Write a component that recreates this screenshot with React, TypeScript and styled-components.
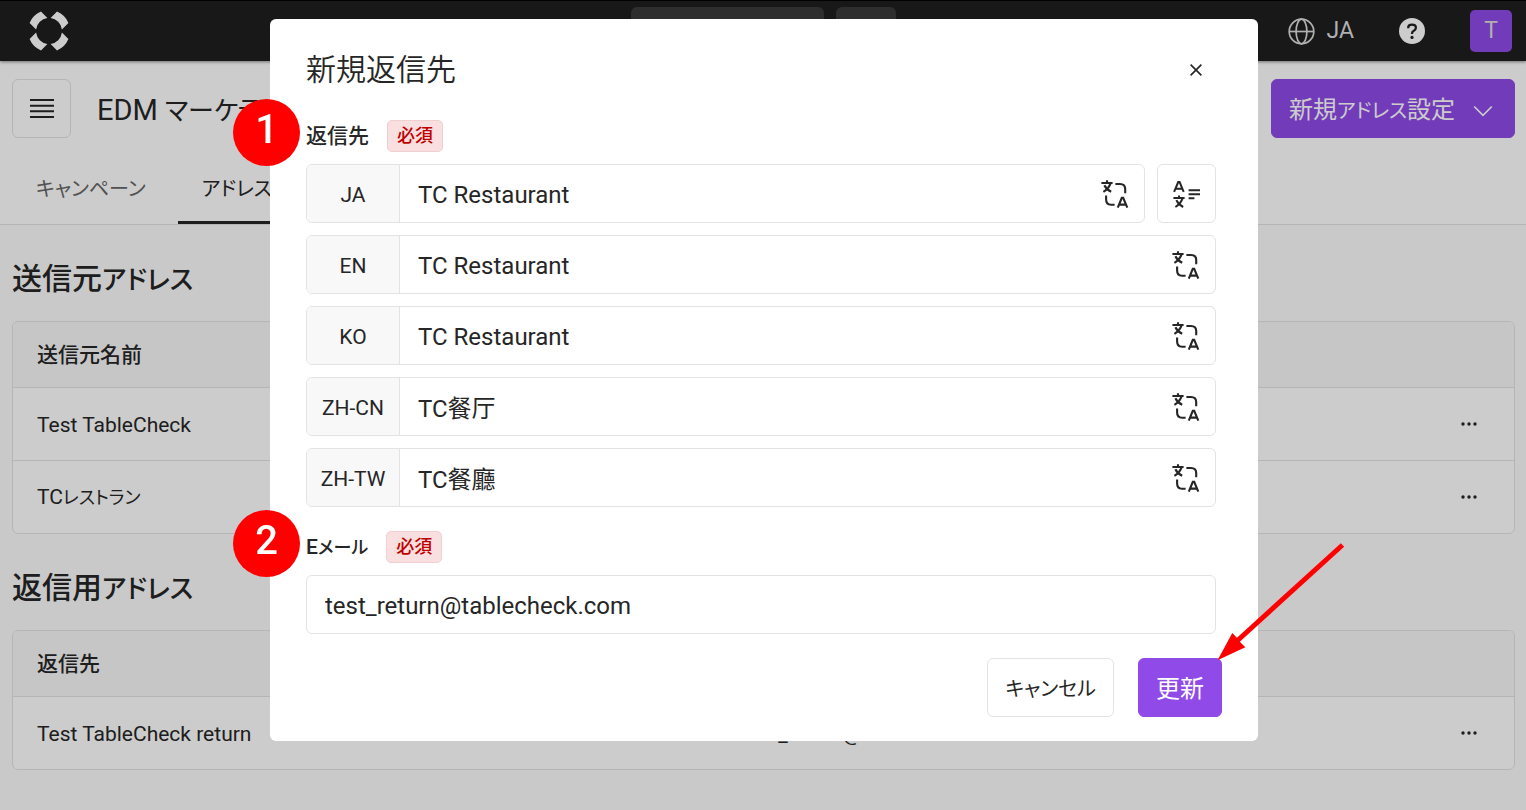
import React from "react";
import styled, { createGlobalStyle, css } from "styled-components";

const ink = "#262626";
const line = "#e3e3e3";
const purple = "#8f4ae8";

const GlobalStyle = createGlobalStyle`
  *, *::before, *::after { box-sizing: border-box; }
  body {
    margin: 0;
    background: #fcfcfc;
    color: ${ink};
    font-family: Roboto, "Noto Sans CJK JP", sans-serif;
    font-feature-settings: "palt";
    font-size: 21px;
    line-height: 32px;
  }
  button, input {
    font: inherit;
    font-feature-settings: inherit;
    color: inherit;
    margin: 0;
  }
  button { cursor: pointer; }
  h1, h2 { margin: 0; }
  svg { display: block; flex: none; }
`;

/* Katakana are set a little smaller than the kanji and Latin beside them. */
const Kana = styled.span<{ $size: 18 | 20 | 26 }>`
  font-size: ${(p) => p.$size}px;
`;

/* ---------- Page chrome ---------- */

const TopBar = styled.header`
  position: relative;
  display: grid;
  grid-template-columns: 1fr auto 1fr;
  height: 61px;
  padding: 0 14px;
  border-top: 1px solid #000;
  background: #1e1e1e;
  color: #dcdcdc;
  box-shadow: 0 1px 3px rgba(0, 0, 0, 0.45);
`;

const Home = styled.a`
  align-self: center;
  justify-self: start;
  margin-left: 15px;
  color: #fff;
`;

const SearchGroup = styled.div`
  display: flex;
  gap: 12px;
  padding-top: 6px;
`;

const SearchPill = styled.button<{ $wide?: boolean }>`
  width: ${(p) => (p.$wide ? 193 : 60)}px;
  height: 46px;
  border: 0;
  border-radius: 6px;
  background: #3a3a3a;
`;

const TopActions = styled.div`
  display: flex;
  align-items: center;
  justify-content: flex-end;
  gap: 45px;
`;

const PlainButton = styled.button`
  display: flex;
  align-items: center;
  gap: 12px;
  padding: 0;
  border: 0;
  background: none;
  font-size: 23px;
`;

const Avatar = styled.button`
  width: 42px;
  height: 42px;
  padding: 0;
  border: 0;
  border-radius: 5px;
  background: ${purple};
  font-size: 23px;
`;

const PageHead = styled.div`
  padding-top: 18px;
  background: #fff;
  border-bottom: 1px solid ${line};
`;

const TitleRow = styled.div`
  display: flex;
  align-items: center;
  gap: 26px;
  padding: 0 11px 0 12px;
`;

const PageTitle = styled.h1`
  flex: 1;
  padding-top: 4px;
  font-size: 29px;
  font-weight: 400;
  line-height: 40px;
`;

const boxed = css`
  height: 59px;
  border: 1px solid ${line};
  border-radius: 6px;
  background: #fff;
`;

const IconButton = styled.button`
  ${boxed}
  display: flex;
  align-items: center;
  justify-content: center;
  flex: none;
  width: 59px;
  padding: 0;
`;

const Button = styled.button<{ $primary?: boolean }>`
  ${boxed}
  display: flex;
  align-items: center;
  gap: 18px;
  padding: 2px 17px 0;
  font-size: 24px;
  ${(p) =>
    p.$primary &&
    css`
      border-color: ${purple};
      background: ${purple};
      color: #fff;
    `}
`;

const MenuButton = styled(Button)`
  padding: 4px 21px 0 17px;
`;

const Tabs = styled.nav`
  display: flex;
  gap: 8px;
  margin-top: 14px;
  padding: 0 12px;
`;

const Tab = styled.a<{ $active?: boolean }>`
  padding: 21px 24px 16px;
  border-bottom: 3px solid ${(p) => (p.$active ? ink : "transparent")};
  color: ${(p) => (p.$active ? ink : "#666")};
  font-size: 20px;
  text-decoration: none;
`;

const Section = styled.section`
  padding: 34px 11px 0 12px;
`;

const SectionTitle = styled.h2`
  height: 40px;
  margin-bottom: 22px;
  font-size: 30px;
  font-weight: 500;
  line-height: 40px;
`;

const TableFrame = styled.div`
  overflow: hidden;
  border: 1px solid ${line};
  border-radius: 6px;
  background: #fff;
`;

const Table = styled.table`
  width: 100%;
  border-collapse: collapse;
  table-layout: fixed;
`;

const HeadCell = styled.th<{ $width?: string }>`
  width: ${(p) => p.$width ?? "auto"};
  height: 65px;
  padding: 2px 24px 0;
  background: #f8f8f8;
  font-weight: 500;
  text-align: left;
`;

const Cell = styled.td`
  height: 73px;
  padding: 2px 24px 0;
  border-top: 1px solid ${line};
`;

const ActionCell = styled(Cell)`
  padding-top: 0;
`;

const MoreButton = styled(PlainButton)`
  justify-content: center;
  width: 42px;
  height: 42px;
`;

/* ---------- Dialog ---------- */

const Backdrop = styled.div`
  position: fixed;
  inset: 0;
  display: flex;
  justify-content: center;
  align-items: flex-start;
  padding: 19px 0 0 2px;
  background: rgba(0, 0, 0, 0.2);
`;

const Dialog = styled.form`
  width: 100%;
  max-width: 988px;
  padding: 0 36px 24px;
  border-radius: 6px;
  background: #fff;
`;

const DialogHead = styled.div`
  display: flex;
  align-items: center;
  justify-content: space-between;
  padding: 24px 6px 23px 0;
`;

const DialogTitle = styled.h2`
  font-size: 30px;
  font-weight: 350;
  line-height: 54px;
`;

const CloseButton = styled(PlainButton)`
  justify-content: center;
  width: 40px;
  height: 40px;
`;

const Field = styled.div`
  position: relative;
  display: flex;
  flex-direction: column;
  gap: 12px;
  margin: 0 6px 24px 0;
`;

const LabelRow = styled.div`
  display: flex;
  align-items: center;
  gap: 18px;
  height: 32px;
`;

const Label = styled.label`
  font-weight: 500;
`;

const Required = styled.span`
  padding: 0 9px;
  border: 1px solid #f0cfd0;
  border-radius: 5px;
  background: #fadfe0;
  color: #c00000;
  font-size: 18px;
  font-weight: 500;
  line-height: 30px;
`;

const InputRow = styled.div`
  display: flex;
  gap: 12px;
`;

const InputBox = styled.div`
  ${boxed}
  display: flex;
  flex: 1;
  align-items: center;
  overflow: hidden;
`;

const Prefix = styled.label`
  align-self: stretch;
  width: 93px;
  border-right: 1px solid ${line};
  background: #f8f8f8;
  line-height: 60px;
  text-align: center;
`;

const TextInput = styled.input`
  flex: 1;
  min-width: 0;
  height: 100%;
  padding: 2px 18px 0;
  border: 0;
  outline: 0;
  background: none;
  font-size: 24px;

  &:lang(zh-CN) { padding-top: 0; font-family: Roboto, "Noto Sans CJK SC", sans-serif; }
  &:lang(zh-TW) { padding-top: 0; font-family: Roboto, "Noto Sans CJK TC", sans-serif; }
`;

const TranslateButton = styled(PlainButton)`
  margin-right: 15px;
`;

const Footer = styled.div`
  display: flex;
  justify-content: flex-end;
  gap: 24px;
`;

/* ---------- Tutorial marks over the dialog ---------- */

const Step = styled.span`
  position: absolute;
  top: -21px;
  left: -73px;
  width: 67px;
  height: 67px;
  border-radius: 50%;
  background: #f00;
  color: #fff;
  font-size: 40px;
  font-weight: 500;
  line-height: 62px;
  text-align: center;
`;

const Pointed = styled.div`
  position: relative;
`;

const Arrow = styled.svg`
  position: absolute;
  top: -118px;
  left: 72px;
  pointer-events: none;
`;

/* ---------- Icons ---------- */

const Logo = () => (
  <svg width="40" height="40" viewBox="-20 -20 40 40" fill="currentColor" aria-hidden="true">
    {[0, 90, 180, 270].map((turn) => (
      <path
        key={turn}
        transform={`rotate(${turn})`}
        d="M-19.4 -8A21 21 0 0 1 -8 -19.4L-1.6 -12.9A13 13 0 0 0 -12.9 -1.6Z"
      />
    ))}
  </svg>
);

const GlobeIcon = () => (
  <svg width="27" height="27" viewBox="0 0 27 27" fill="none" stroke="currentColor" strokeWidth="1.7" aria-hidden="true">
    <circle cx="13.5" cy="13.5" r="12.3" />
    <ellipse cx="13.5" cy="13.5" rx="5.4" ry="12.3" />
    <path d="M1.2 13.5H25.8" />
  </svg>
);

const HelpIcon = () => (
  <svg width="26" height="26" viewBox="0 0 26 26" aria-hidden="true">
    <circle cx="13" cy="13" r="13" fill="#fff" />
    <path d="M9.2 10.2V9.8Q9.2 6.7 13 6.7Q16.9 6.7 16.9 9.8Q16.9 11.7 14.9 12.7Q13 13.6 13 15.6V16" fill="none" stroke="#1e1e1e" strokeWidth="2.2" />
    <circle cx="13" cy="19.4" r="1.6" fill="#1e1e1e" />
  </svg>
);

const MenuIcon = () => (
  <svg width="24" height="19" viewBox="0 0 24 19" stroke="currentColor" strokeWidth="1.9" aria-hidden="true">
    <path d="M0 1H24M0 6.7H24M0 12.3H24M0 18H24" />
  </svg>
);

const ChevronIcon = () => (
  <svg width="20" height="12" viewBox="0 0 20 12" fill="none" stroke="currentColor" strokeWidth="1.7" aria-hidden="true">
    <path d="M1.2 1.5L10 10.3L18.8 1.5" />
  </svg>
);

const MoreIcon = () => (
  <svg width="16" height="4" viewBox="0 0 16 4" fill="currentColor" aria-hidden="true">
    <circle cx="2" cy="2" r="1.7" />
    <circle cx="8" cy="2" r="1.7" />
    <circle cx="14" cy="2" r="1.7" />
  </svg>
);

const CloseIcon = () => (
  <svg width="12" height="12" viewBox="0 0 12 12" stroke="currentColor" strokeWidth="1.6" aria-hidden="true">
    <path d="M.6 .6L11.4 11.4M11.4 .6L.6 11.4" />
  </svg>
);

const TranslateIcon = () => (
  <svg width="28" height="28" viewBox="0 0 28 28" fill="none" stroke="currentColor" strokeWidth="2.1" aria-hidden="true">
    <path d="M6 .2V3M.4 3H11.6M9.4 3.6Q8 8.4 2.4 11.8M3.4 5.2Q5.4 9.6 10.2 11.8" />
    <path d="M14.4 4H19Q24.2 4 24.2 9V13.2" />
    <path d="M5.1 15.4V19.6Q5.1 24.8 10 24.8H13.6" />
    <path d="M16.8 27.6L20.8 17.8H22.2L26.3 27.6M18.2 24.6H24.8" />
  </svg>
);

const TranslateAllIcon = () => (
  <svg width="28" height="28" viewBox="0 0 28 28" fill="none" stroke="currentColor" strokeWidth="2" aria-hidden="true">
    <path d="M1.1 11.8L5.2 2H6.6L10.7 11.8M2.5 8.8H9.3" />
    <path d="M6 15.4V18M.4 18H11.6M9.4 18.6Q8 23.4 2.4 27M3.4 20.2Q5.4 24.8 10.2 27" />
    <path d="M15.6 10.2H27M15.6 14.2H27M15.6 18.2H21.4" />
  </svg>
);

/* ---------- Data ---------- */

const names = [
  { lang: "ja", code: "JA", value: "TC Restaurant" },
  { lang: "en", code: "EN", value: "TC Restaurant" },
  { lang: "ko", code: "KO", value: "TC Restaurant" },
  { lang: "zh-CN", code: "ZH-CN", value: "TC餐厅" },
  { lang: "zh-TW", code: "ZH-TW", value: "TC餐廳" },
];

type AddressTableProps = {
  title: string;
  columns: React.ReactNode[];
  rows: React.ReactNode[][];
};

const AddressTable = ({ title, columns, rows }: AddressTableProps) => (
  <Section>
    <SectionTitle>
      {title}
      <Kana $size={26}>アドレス</Kana>
    </SectionTitle>
    <TableFrame>
      <Table>
        <thead>
          <tr>
            {columns.map((name, i) => (
              <HeadCell key={i} $width={i === 0 && columns.length > 1 ? "47%" : undefined}>
                {name}
              </HeadCell>
            ))}
            <HeadCell $width="90px" aria-label="操作" />
          </tr>
        </thead>
        <tbody>
          {rows.map((row, r) => (
            <tr key={r}>
              {row.map((text, i) => (
                <Cell key={i}>{text}</Cell>
              ))}
              <ActionCell>
                <MoreButton type="button" aria-label="メニュー">
                  <MoreIcon />
                </MoreButton>
              </ActionCell>
            </tr>
          ))}
        </tbody>
      </Table>
    </TableFrame>
  </Section>
);

export default function App() {
  return (
    <>
      <GlobalStyle />
      <TopBar>
        <Home href="#" aria-label="ホーム">
          <Logo />
        </Home>
        <SearchGroup>
          <SearchPill $wide type="button" aria-label="店舗" />
          <SearchPill type="button" aria-label="検索" />
        </SearchGroup>
        <TopActions>
          <PlainButton type="button">
            <GlobeIcon />
            JA
          </PlainButton>
          <PlainButton type="button" aria-label="ヘルプ">
            <HelpIcon />
          </PlainButton>
          <Avatar type="button">T</Avatar>
        </TopActions>
      </TopBar>

      <PageHead>
        <TitleRow>
          <IconButton type="button" aria-label="メニュー">
            <MenuIcon />
          </IconButton>
          <PageTitle>
            EDM <Kana $size={26}>マーケティング</Kana>
          </PageTitle>
          <MenuButton $primary type="button">
            <span>
              新規<Kana $size={20}>アドレス</Kana>設定
            </span>
            <ChevronIcon />
          </MenuButton>
        </TitleRow>
        <Tabs>
          <Tab href="#">キャンペーン</Tab>
          <Tab href="#" $active>
            アドレス
          </Tab>
        </Tabs>
      </PageHead>

      <main>
        <AddressTable
          title="送信元"
          columns={["送信元名前"]}
          rows={[["Test TableCheck"], [<>TC<Kana $size={18}>レストラン</Kana></>]]}
        />
        <AddressTable
          title="返信用"
          columns={["返信先", <>E<Kana $size={18}>メール</Kana></>]}
          rows={[["Test TableCheck return", "test_return@tablecheck.com"]]}
        />
      </main>

      <Backdrop>
        <Dialog role="dialog" aria-labelledby="dialog-title" onSubmit={(e) => e.preventDefault()}>
          <DialogHead>
            <DialogTitle id="dialog-title">新規返信先</DialogTitle>
            <CloseButton type="button" aria-label="閉じる">
              <CloseIcon />
            </CloseButton>
          </DialogHead>

          <Field>
            <Step>1</Step>
            <LabelRow>
              <Label htmlFor="name-ja">返信先</Label>
              <Required>必須</Required>
            </LabelRow>
            {names.map(({ lang, code, value }) => (
              <InputRow key={code}>
                <InputBox>
                  <Prefix htmlFor={`name-${lang}`}>{code}</Prefix>
                  <TextInput id={`name-${lang}`} lang={lang} defaultValue={value} />
                  <TranslateButton type="button" aria-label="翻訳">
                    <TranslateIcon />
                  </TranslateButton>
                </InputBox>
                {lang === "ja" && (
                  <IconButton type="button" aria-label="すべて翻訳">
                    <TranslateAllIcon />
                  </IconButton>
                )}
              </InputRow>
            ))}
          </Field>

          <Field>
            <Step>2</Step>
            <LabelRow>
              <Label htmlFor="email">
                E<Kana $size={18}>メール</Kana>
              </Label>
              <Required>必須</Required>
            </LabelRow>
            <InputRow>
              <InputBox>
                <TextInput id="email" type="email" defaultValue="test_return@tablecheck.com" />
              </InputBox>
            </InputRow>
          </Field>

          <Footer>
            <Button type="button">
              <Kana $size={20}>キャンセル</Kana>
            </Button>
            <Pointed>
              <Button $primary type="submit">
                更新
              </Button>
              <Arrow width="140" height="125" viewBox="0 0 140 125" aria-hidden="true">
                <path d="M132.5 5L27 101" stroke="#f00" strokeWidth="5" />
                <path d="M7.5 120.3L22.3 93L28 99L30 102L35.3 107.3Z" fill="#f00" />
              </Arrow>
            </Pointed>
          </Footer>
        </Dialog>
      </Backdrop>
    </>
  );
}
